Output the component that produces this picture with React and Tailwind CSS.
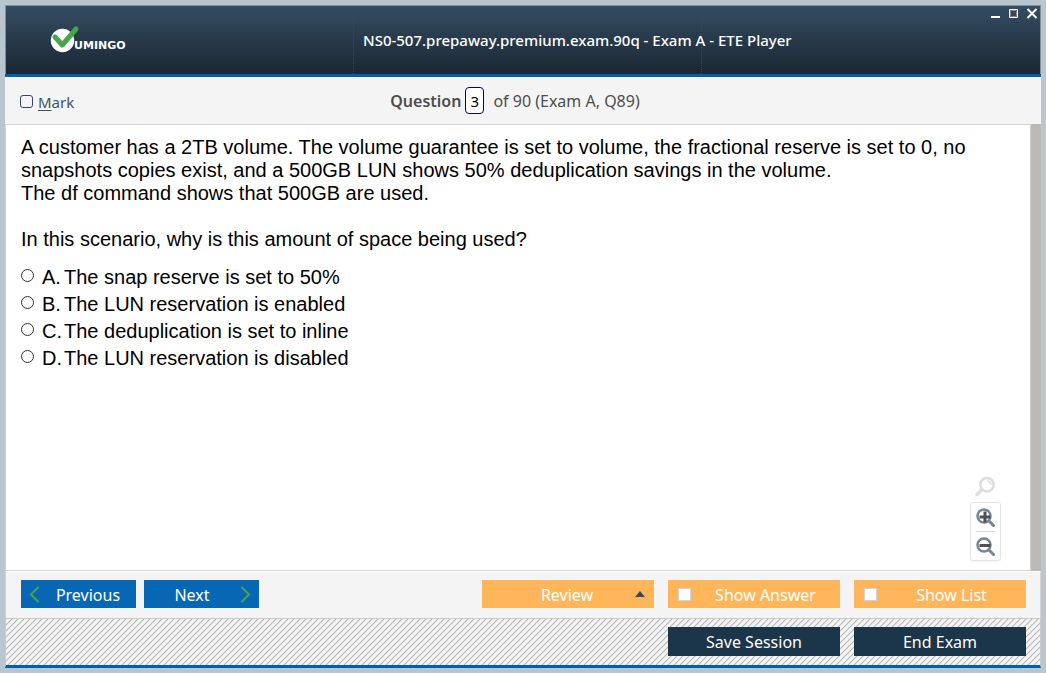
const answers = [
  ["A.", "The snap reserve is set to 50%"],
  ["B.", "The LUN reservation is enabled"],
  ["C.", "The deduplication is set to inline"],
  ["D.", "The LUN reservation is disabled"],
];

function Logo() {
  return (
    <svg width="90" height="30" viewBox="0 0 90 30" role="img" aria-label="Vumingo">
      <circle cx="13.500" cy="15.500" r="11.700" fill="#fff" />
      <path d="M6 12 L13.300 20 L27 4" fill="none" stroke="#45a648" strokeWidth="5" strokeLinecap="round" strokeLinejoin="round" />
      <text x="25" y="24" fill="#fff" fontSize="11" fontWeight="700" fontFamily="DejaVu Sans, sans-serif">UMINGO</text>
    </svg>
  );
}

function Lens({ sign }) {
  return (
    <svg width="20" height="20" viewBox="0 0 20 20" fill="none" aria-hidden="true">
      <circle cx="8" cy="9" r="6.500" stroke="#778792" strokeWidth="2.500" />
      <path d="M13 14 L17.500 18.500" stroke="#778792" strokeWidth="3" strokeLinecap="round" />
      <path d={sign === "plus" ? "M3.500 10 H14.500 M9 4.500 V15.500" : "M3.500 9.500 H14.500"} stroke="#505050" strokeWidth="3" />
    </svg>
  );
}

function Toggle({ children }) {
  return (
    <label className="flex h-7 w-[172px] items-center bg-[#ffb65b] pl-[10px] text-white">
      <input type="checkbox" className="size-[13px] shrink-0 appearance-none border border-[#ccd3dc] bg-white checked:bg-[#1b354a]" />
      <span className="flex-1 pt-0.5 text-center">{children}</span>
    </label>
  );
}

export default function App() {
  return (
    <div className="flex min-h-screen flex-col bg-[#b9c6cd] p-[5px] font-['Noto_Sans',sans-serif] text-base text-[#4d4d4d]">
      <div className="flex flex-1 flex-col">
        <header className="grid h-[69px] grid-cols-[347fr_349fr_338fr] items-center border border-b-0 border-[#7f9197] bg-linear-to-b from-[#354d62] to-[#1a2734]">
          <div className="pl-[43px]"><Logo /></div>
          <h1 className="flex h-full min-w-0 items-center border-x border-dotted border-[#2f3f9a] pl-[9px] text-[15px] font-medium whitespace-nowrap text-white">
            NS0-507.prepaway.premium.exam.90q - Exam A - ETE Player
          </h1>
          <div className="flex gap-2 self-start justify-self-end pt-px pr-[2px]">
            <button aria-label="Minimize" className="flex h-3 w-[10px]"><svg width="10" height="12"><path d="M1 9h9v2H1z" fill="#fff" /></svg></button>
            <button aria-label="Maximize" className="flex h-3 w-[10px]"><svg width="10" height="12"><path d="M1.500 2.500h8v8h-8z" fill="none" stroke="#fff" /><path d="M2.500 3.500h6v6h-6z" fill="none" stroke="#8a8078" /></svg></button>
            <button aria-label="Close" className="flex h-3 w-3"><svg width="12" height="12"><path d="M1.500 2l9 9M10.500 2l-9 9" stroke="#fff" strokeWidth="2" /></svg></button>
          </div>
        </header>
        <div className="grid h-[51px] grid-cols-3 items-center border-t-[3px] border-b border-t-[#0060ad] border-b-[#d2d2d2] bg-[#f4f4f4] px-[15px]">
          <label className="flex items-center gap-[5px] pt-0.5 text-[15px] text-[#3f5264]">
            <input type="checkbox" className="size-[13px] appearance-none rounded-[3px] border border-[#34495e] checked:bg-[#34495e]" />
            <span className="pt-0.5"><u className="underline-offset-2">M</u>ark</span>
          </label>
          <div className="flex items-center justify-center pr-4 whitespace-nowrap">
            <label htmlFor="question" className="font-semibold">Question</label>
            <input id="question" defaultValue="3" className="mx-1 h-[27px] w-[19px] rounded-[4px] border border-[#00007f] bg-white text-center text-[15px] text-black" />
            <span className="pl-[5px]">of 90 (Exam A, Q89)</span>
          </div>
        </div>
        <main className="flex flex-1 bg-white font-['Liberation_Sans',Arial,sans-serif] text-xl leading-[23px] text-black">
          <div className="relative flex-1 border-x border-b border-[#d2d2d2] px-[15px] pt-[11px]">
            <p>A customer has a 2TB volume. The volume guarantee is set to volume, the fractional reserve is set to 0, no snapshots copies exist, and a 500GB LUN shows 50% deduplication savings in the volume.</p>
            <p>The df command shows that 500GB are used.</p>
            <p className="mt-[23px]">In this scenario, why is this amount of space being used?</p>
            <fieldset className="mt-[13px]">
              {answers.map(([letter, text]) => (
                <label key={letter} className="flex h-[27px] items-center">
                  <input type="radio" name="answer" className="mb-1 size-[13px] appearance-none rounded-full border border-[#333] bg-white checked:bg-[#333]" />
                  <span className="ml-2 w-[22px]">{letter}</span>
                  <span>{text}</span>
                </label>
              ))}
            </fieldset>
            <div className="absolute right-[29px] bottom-[9px] flex flex-col items-center">
              <button aria-label="Reset zoom" className="mb-1">
                <svg width="22" height="22" viewBox="0 0 22 22" fill="none" stroke="#dedede" strokeLinecap="round"><circle cx="12" cy="8.700" r="6.700" strokeWidth="2.500" /><path d="M6.500 14 L2 18.500" strokeWidth="3.500" /><path d="M12.500 5 Q15.500 5.500 16 8.500" strokeWidth="1.500" /></svg>
              </button>
              <div className="flex w-[31px] flex-col items-center rounded-[3px] border border-[#e4e4e4] bg-white shadow-xs">
                <button aria-label="Zoom in" className="flex h-7 items-center"><Lens sign="plus" /></button>
                <span className="h-px w-[19px] bg-[#dedede]" />
                <button aria-label="Zoom out" className="flex h-7 items-center"><Lens sign="minus" /></button>
              </div>
            </div>
          </div>
          <div className="-mt-px w-[10px] bg-[#bbb9b5]" />
        </main>
        <div className="flex h-[47px] items-start gap-[14px] border-x border-t border-[#d2d2d2] border-t-white bg-[#f4f4f4] pt-2 pr-[14px] pl-[15px]">
          <div className="mr-auto flex gap-2 text-white">
            <button className="flex h-7 w-[115px] items-center bg-[#0867b5] pl-2">
              <svg width="11" height="17" fill="none" stroke="#45a648" strokeWidth="2"><path d="M9.500 1 L2 8.500 L9.500 16" /></svg>
              <span className="flex-1 pt-0.5 text-center">Previous</span>
            </button>
            <button className="flex h-7 w-[115px] items-center bg-[#0867b5] pr-2">
              <span className="flex-1 pt-0.5 text-center">Next</span>
              <svg width="11" height="17" fill="none" stroke="#45a648" strokeWidth="2"><path d="M1.500 1 L9 8.500 L1.500 16" /></svg>
            </button>
          </div>
          <button className="flex h-7 w-[172px] items-center bg-[#ffb65b] px-[9px] text-white">
            <span className="flex-1 pt-0.5 pl-2 text-center">Review</span>
            <svg width="10" height="6"><path d="M0 6 L5 0 L10 6z" fill="#34495e" /></svg>
          </button>
          <Toggle>Show Answer</Toggle>
          <Toggle>Show List</Toggle>
        </div>
        <footer className="flex h-[50px] items-start justify-end gap-[14px] border-x border-t border-b-[3px] border-[#cacaca] border-b-[#0060ad] bg-[#f4f4f4] bg-[repeating-linear-gradient(135deg,#b8b8b8_0px,#f4f4f4_1px,#f4f4f4_3.243px,#b8b8b8_4.243px)] px-[14px] pt-2 text-white">
          <button className="h-[29px] w-[172px] bg-[#1b354a]">Save Session</button>
          <button className="h-[29px] w-[172px] bg-[#1b354a]">End Exam</button>
        </footer>
      </div>
    </div>
  );
}
